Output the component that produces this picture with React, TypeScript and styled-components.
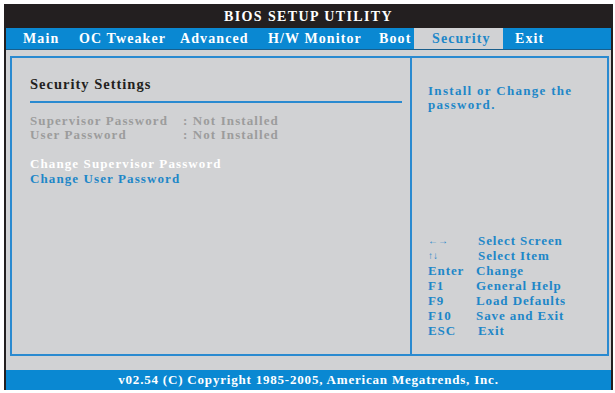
import React from 'react';
import styled, { createGlobalStyle } from 'styled-components';

const GlobalStyle = createGlobalStyle`
  html, body {
    margin: 0;
    padding: 0;
    background: #ffffff;
  }
  body {
    font-family: "Liberation Serif", "Times New Roman", serif;
    font-weight: bold;
  }
`;

// width of each tab cell and left inset of its label
const tabs = [
  { label: 'Main', width: 56, pad: 8 },
  { label: 'OC Tweaker', width: 101, pad: 8 },
  { label: 'Advanced', width: 88, pad: 8 },
  { label: 'H/W Monitor', width: 111, pad: 8 },
  { label: 'Boot', width: 43, pad: 8 },
  { label: 'Security', width: 89, pad: 18 },
  { label: 'Exit', width: 60, pad: 12 },
];

const keys = [
  { key: '←→', label: 'Select Screen', small: true },
  { key: '↑↓', label: 'Select Item', small: true },
  { key: 'Enter', label: 'Change' },
  { key: 'F1', label: 'General Help' },
  { key: 'F9', label: 'Load Defaults' },
  { key: 'F10', label: 'Save and Exit' },
  { key: 'ESC', label: 'Exit' },
];

export default function App() {
  return (
    <>
      <GlobalStyle />
      <Page>
        <Frame>
          <TitleBar>BIOS SETUP UTILITY</TitleBar>
          <MenuBar>
            {tabs.map((t) => (
              <Tab key={t.label} $active={t.label === 'Security'} $width={t.width} $pad={t.pad}>
                {t.label}
              </Tab>
            ))}
          </MenuBar>
          <Body>
            <Panel>
              <LeftCol>
                <Heading>Security Settings</Heading>
                <Rule />
                <InfoRow>
                  <InfoLabel>Supervisor Password</InfoLabel>
                  <span>: Not Installed</span>
                </InfoRow>
                <InfoRow>
                  <InfoLabel>User Password</InfoLabel>
                  <span>: Not Installed</span>
                </InfoRow>
                <Options>
                  <Option $selected>Change Supervisor Password</Option>
                  <Option>Change User Password</Option>
                </Options>
              </LeftCol>
              <RightCol>
                <HelpText>
                  Install or Change the
                  <br />
                  password.
                </HelpText>
                <KeyList>
                  {keys.map((k) => (
                    <React.Fragment key={k.label}>
                      <KeyName $small={k.small}>{k.key}</KeyName>
                      <KeyDesc $indent={k.label === 'Exit' || k.label.startsWith('Select')}>
                        {k.label}
                      </KeyDesc>
                    </React.Fragment>
                  ))}
                </KeyList>
              </RightCol>
            </Panel>
          </Body>
          <Footer>v02.54 (C) Copyright 1985-2005, American Megatrends, Inc.</Footer>
        </Frame>
      </Page>
    </>
  );
}

const Page = styled.div`
  padding: 4px 2px 3px 4px;
  width: 615px;
  height: 393px;
  box-sizing: border-box;
`;

const Frame = styled.div`
  height: 100%;
  display: flex;
  flex-direction: column;
  border-left: 2px solid #231f20;
  border-right: 2px solid #231f20;
  background: #d1d2d4;
`;

const TitleBar = styled.div`
  height: 24px;
  background: #231f20;
  color: #ffffff;
  font-size: 14px;
  letter-spacing: 1.4px;
  display: flex;
  align-items: center;
  justify-content: center;
  padding-top: 2px;
  box-sizing: border-box;
`;

const MenuBar = styled.div`
  height: 21px;
  background: #0a88d2;
  display: flex;
  align-items: stretch;
  padding-left: 9px;
  border-bottom: 1px solid #1a5f8c;
`;

const Tab = styled.div<{ $active?: boolean; $width: number; $pad: number }>`
  display: flex;
  align-items: center;
  width: ${(p) => p.$width}px;
  padding-left: ${(p) => p.$pad}px;
  box-sizing: border-box;
  font-size: 14px;
  letter-spacing: 1.1px;
  color: ${(p) => (p.$active ? '#1e87c8' : '#ffffff')};
  background: ${(p) => (p.$active ? '#d1d2d4' : 'transparent')};
  white-space: nowrap;
`;

const Body = styled.div`
  flex: 1;
  padding: 6px 2px 14px 4px;
  display: flex;
`;

const Panel = styled.div`
  flex: 1;
  display: flex;
  border: 2px solid #2a8ad0;
`;

const LeftCol = styled.div`
  width: 400px;
  border-right: 2px solid #2a8ad0;
  padding: 18px 8px 0 18px;
  box-sizing: border-box;
  font-size: 13px;
  letter-spacing: 1.1px;
`;

const Heading = styled.div`
  color: #231f20;
  font-size: 14.5px;
  letter-spacing: 1px;
  line-height: 17px;
`;

const Rule = styled.div`
  height: 2px;
  background: #2a8ad0;
  margin: 8px 0 11px 0;
`;

const InfoRow = styled.div`
  display: flex;
  color: #9c9c9c;
  line-height: 14px;
`;

const InfoLabel = styled.span`
  width: 153px;
`;

const Options = styled.div`
  margin-top: 14px;
`;

const Option = styled.div<{ $selected?: boolean }>`
  color: ${(p) => (p.$selected ? '#ffffff' : '#1e87c8')};
  line-height: 15px;
`;

const RightCol = styled.div`
  flex: 1;
  padding: 26px 8px 0 16px;
  display: flex;
  flex-direction: column;
  color: #1e87c8;
  font-size: 13px;
  letter-spacing: 0.9px;
`;

const HelpText = styled.div`
  letter-spacing: 1.3px;
  line-height: 14px;
`;

const KeyList = styled.div`
  margin-top: 121px;
  display: grid;
  grid-template-columns: 48px 1fr;
  line-height: 15px;
`;

const KeyName = styled.span<{ $small?: boolean }>`
  font-size: ${(p) => (p.$small ? '10px' : '13px')};
  letter-spacing: ${(p) => (p.$small ? '0' : '0.9px')};
`;

const KeyDesc = styled.span<{ $indent?: boolean }>`
  padding-left: ${(p) => (p.$indent ? '2px' : '0')};
`;

const Footer = styled.div`
  height: 20px;
  background: #0a88d2;
  color: #ffffff;
  font-size: 13px;
  letter-spacing: 0.8px;
  display: flex;
  align-items: center;
  justify-content: center;
`;
